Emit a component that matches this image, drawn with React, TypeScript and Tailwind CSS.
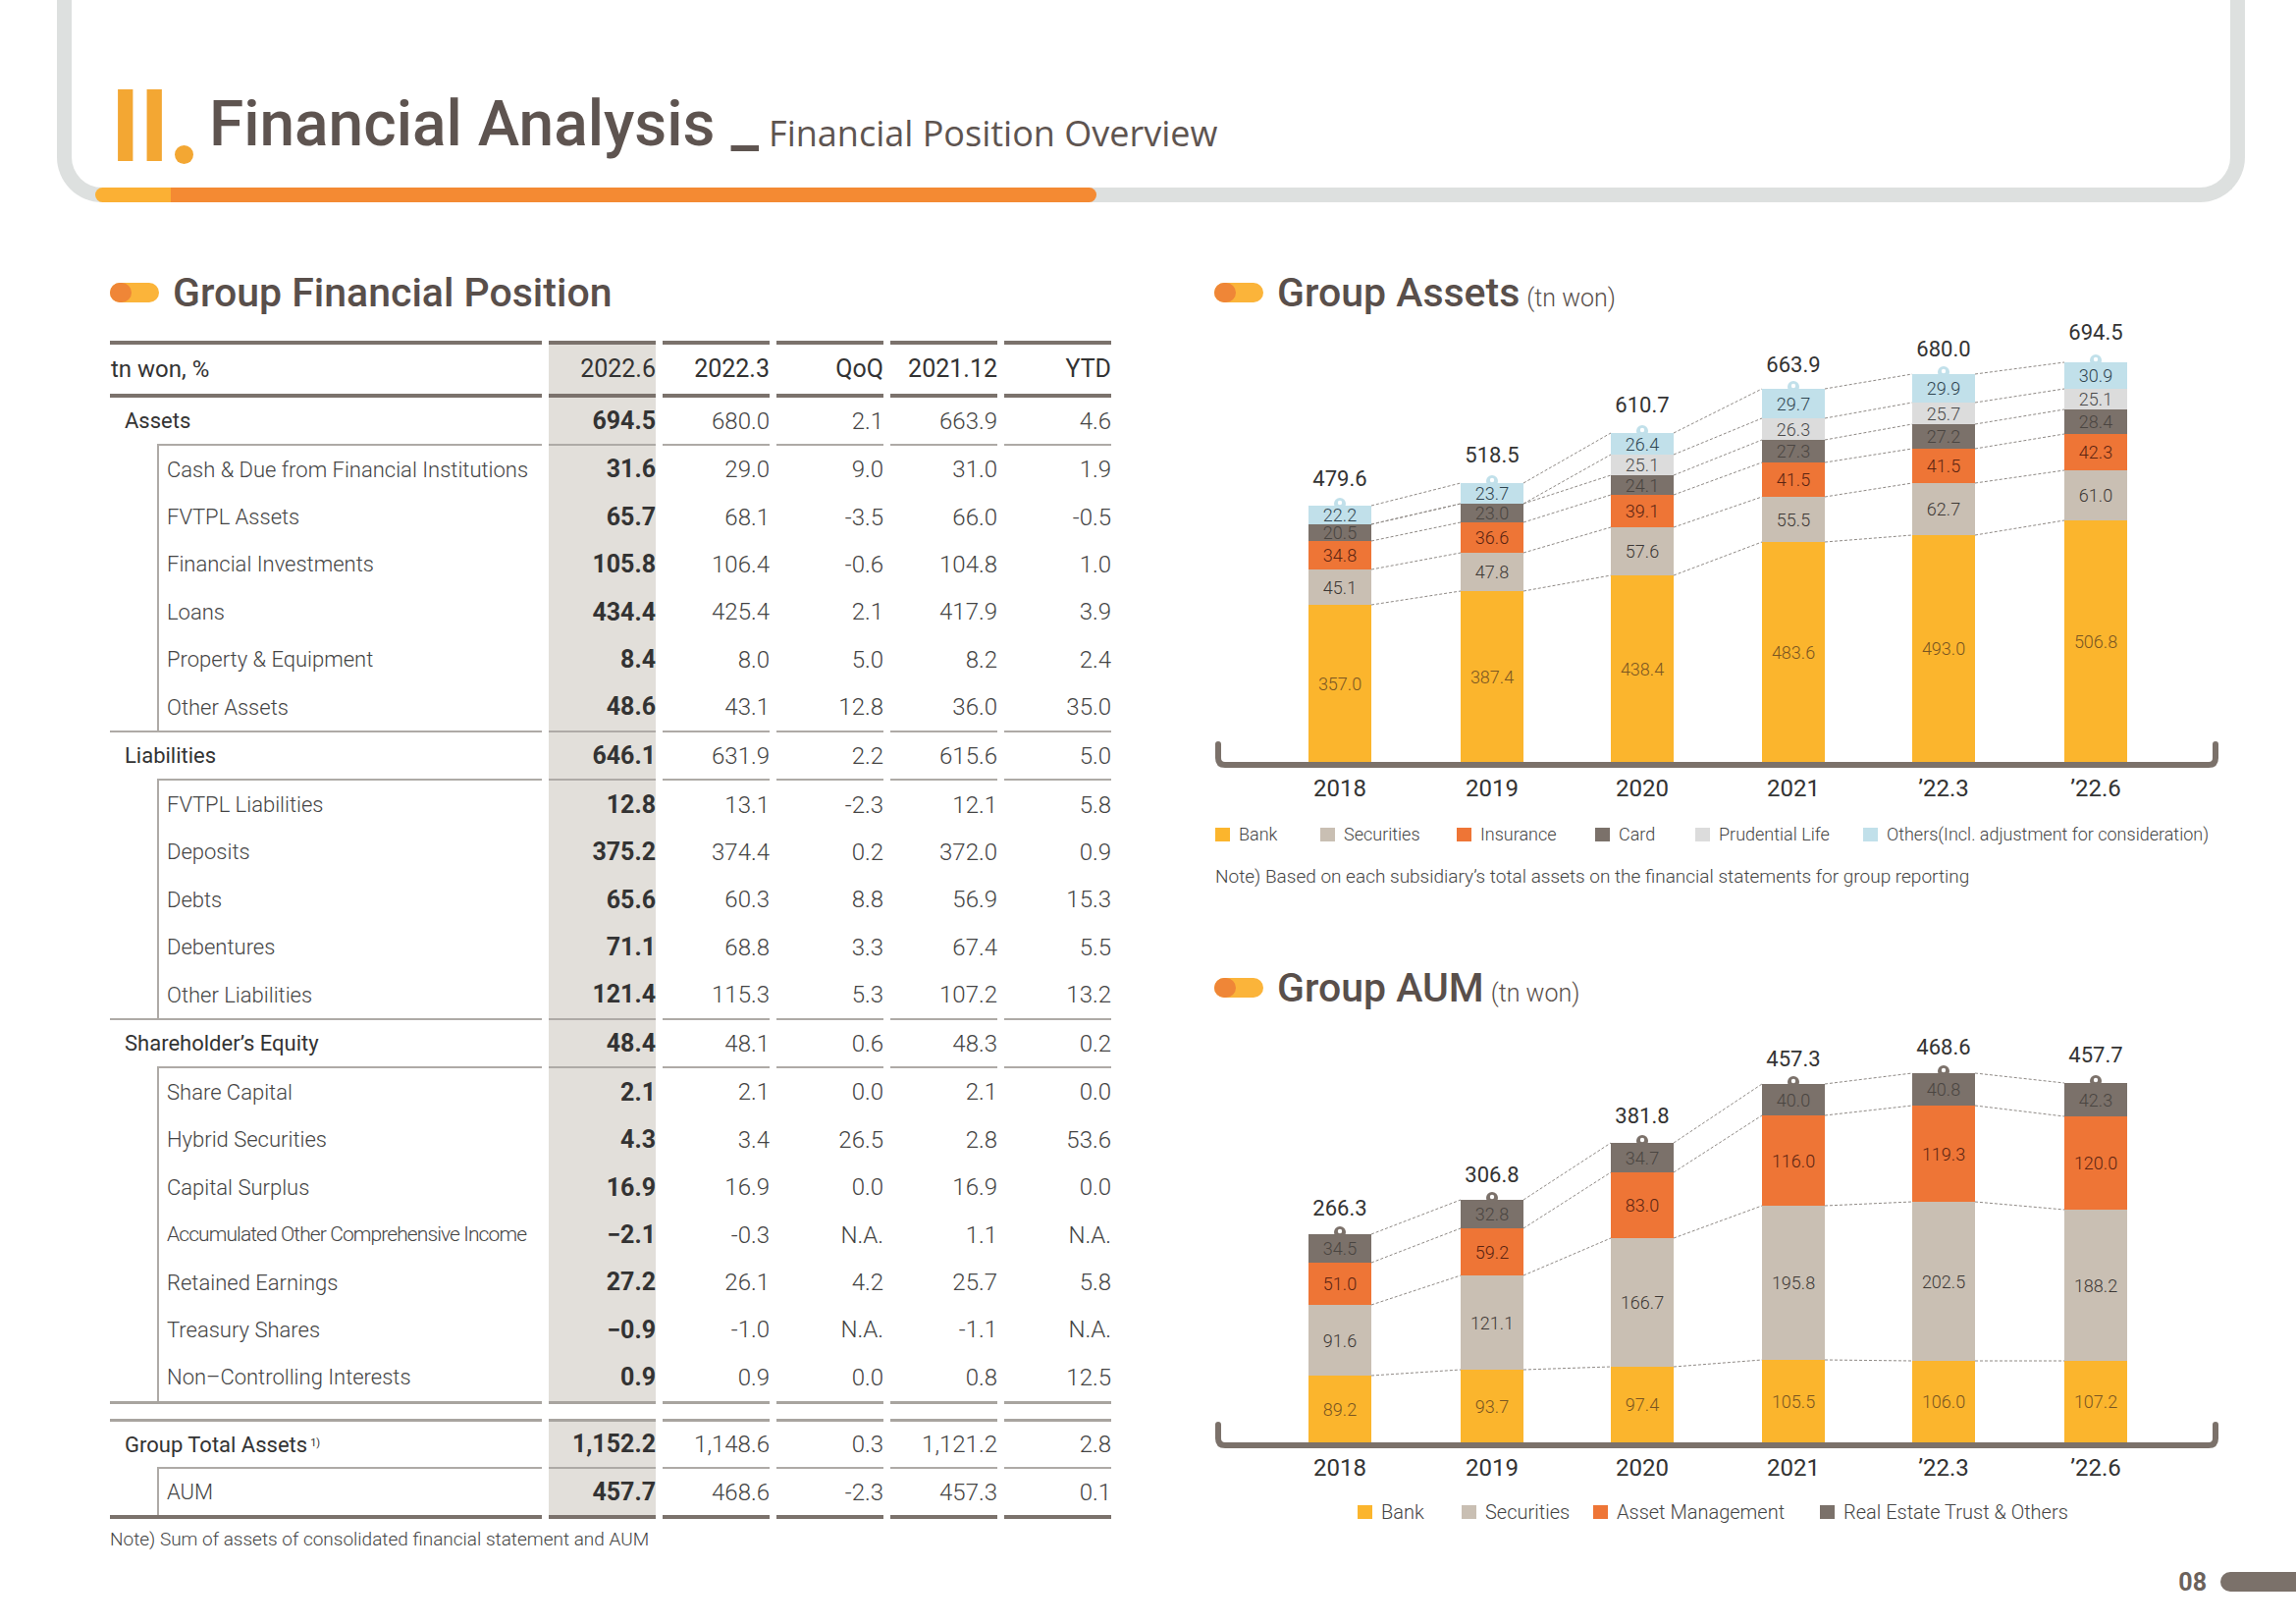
import React from 'react';

const BAR_X = [96, 251, 404, 558, 711, 866];
const BW = 64;
const YEARS = ['2018', '2019', '2020', '2021', '\u201922.3', '\u201922.6'];

const ASSET_COLORS = ['#fbb52d', '#c9bfb3', '#ee7536', '#7b716a', '#dcdcdc', '#c1e0ea'];
const ASSET_TEXT = ['#7a5522', '#3d3835', '#5a2412', '#4a4541', '#4a4a4a', '#2f4550'];
const AUM_COLORS = ['#fbb52d', '#c9bfb3', '#ee7536', '#7b716a'];
const AUM_TEXT = ['#7a5522', '#3d3835', '#5a2412', '#4a4541'];

const ASSET_BOUNDS = [
  [458, 298, 262, 233, 216, 216, 197],
  [458, 284, 245, 214, 195, 195, 174],
  [458, 268, 219, 186, 166, 145, 123],
  [458, 234, 188, 153, 130, 108, 78],
  [458, 227, 174, 139, 114, 92, 63],
  [458, 212, 161, 124, 99, 78, 51],
];
const ASSET_VALS = [
  ['357.0', '45.1', '34.8', '20.5', '', '22.2'],
  ['387.4', '47.8', '36.6', '23.0', '', '23.7'],
  ['438.4', '57.6', '39.1', '24.1', '25.1', '26.4'],
  ['483.6', '55.5', '41.5', '27.3', '26.3', '29.7'],
  ['493.0', '62.7', '41.5', '27.2', '25.7', '29.9'],
  ['506.8', '61.0', '42.3', '28.4', '25.1', '30.9'],
];
const ASSET_TOTALS = ['479.6', '518.5', '610.7', '663.9', '680.0', '694.5'];
const ASSET_TOTAL_Y = [169.5, 145, 94, 53, 37, 20];

const AUM_BOUNDS = [
  [443, 375, 303, 260, 231],
  [443, 369, 273, 225, 196],
  [443, 366, 235, 168, 138],
  [443, 359, 202, 110, 78],
  [443, 360, 198, 100, 67],
  [443, 360, 206, 111, 77],
];
const AUM_VALS = [
  ['89.2', '91.6', '51.0', '34.5'],
  ['93.7', '121.1', '59.2', '32.8'],
  ['97.4', '166.7', '83.0', '34.7'],
  ['105.5', '195.8', '116.0', '40.0'],
  ['106.0', '202.5', '119.3', '40.8'],
  ['107.2', '188.2', '120.0', '42.3'],
];
const AUM_TOTALS = ['266.3', '306.8', '381.8', '457.3', '468.6', '457.7'];
const AUM_TOTAL_Y = [204, 170, 110, 52, 40, 48];

type ChartProps = {
  bounds: number[][];
  vals: string[][];
  totals: string[];
  totalY: number[];
  colors: string[];
  textColors: string[];
  height: number;
  base: number;
  yearY: number;
};

function StackChart({ bounds, vals, totals, totalY, colors, textColors, height, base, yearY }: ChartProps) {
  const b3 = base + 3;
  const bracket = `M 4 ${base - 18} L 4 ${base - 4} Q 4 ${b3} 11 ${b3} L 1013 ${b3} Q 1020 ${b3} 1020 ${base - 4} L 1020 ${base - 18}`;
  return (
    <svg width={1030} height={height} className="block" fontFamily="Roboto, sans-serif">
      {bounds.slice(0, -1).map((b, i) =>
        b.slice(1).map((y, k) => (
          <line
            key={`c${i}-${k}`}
            x1={BAR_X[i] + BW}
            y1={y}
            x2={BAR_X[i + 1]}
            y2={bounds[i + 1][k + 1]}
            stroke="#8f8a86"
            strokeWidth={1}
            strokeDasharray="3 2"
          />
        ))
      )}
      {bounds.map((b, i) => {
        const cx = BAR_X[i] + BW / 2;
        const top = b[b.length - 1];
        const topColor = colors[b.length - 2];
        return (
          <g key={i}>
            {b.slice(0, -1).map((y0, k) => {
              const y1 = b[k + 1];
              if (y0 - y1 <= 0) return null;
              return <rect key={k} x={BAR_X[i]} y={y1} width={BW} height={y0 - y1} fill={colors[k]} />;
            })}
            <circle cx={cx} cy={top - 2} r={6} fill={topColor} />
            <circle cx={cx} cy={top - 3} r={2.2} fill="#ffffff" />
            {vals[i].map((v, k) =>
              v ? (
                <text
                  key={`t${k}`}
                  x={cx}
                  y={(b[k] + b[k + 1]) / 2}
                  textAnchor="middle"
                  dominantBaseline="central"
                  fontSize={18}
                  fontWeight={300}
                  fill={textColors[k]}
                >
                  {v}
                </text>
              ) : null
            )}
            <text x={cx} y={totalY[i]} textAnchor="middle" dominantBaseline="central" fontSize={22} fill="#333333">
              {totals[i]}
            </text>
            <text x={cx} y={yearY} textAnchor="middle" dominantBaseline="central" fontSize={24} fill="#333333">
              {YEARS[i]}
            </text>
          </g>
        );
      })}
      <path d={bracket} fill="none" stroke="#7b716a" strokeWidth={6} strokeLinecap="round" />
    </svg>
  );
}

function SectionHead({ title, unit }: { title: string; unit?: string }) {
  return (
    <div className="h-[40px] flex items-center">
      <div className="w-[50px] h-[20px] rounded-full bg-[#fbb43a] overflow-hidden flex">
        <div className="w-[22px] h-full rounded-r-full bg-[#ef8637]" />
      </div>
      <div className="ml-[14px] flex items-baseline leading-none">
        <span className="text-[41px] font-medium text-[#594f4b]">{title}</span>
        {unit && <span className="ml-[7px] text-[25px] font-light text-[#594f4b]">{unit}</span>}
      </div>
    </div>
  );
}

function HLine({ cls, indent }: { cls: string; indent?: boolean }) {
  return (
    <div className="flex gap-x-[7px]">
      <div className="w-[440px] flex">
        <div className={`${indent ? 'ml-[48px]' : ''} flex-1 ${cls}`} />
      </div>
      {[0, 1, 2, 3, 4].map((i) => (
        <div key={i} className={`w-[109px] ${cls}`} />
      ))}
    </div>
  );
}

type RowProps = { kind: 'header' | 'group' | 'sub'; label: React.ReactNode; v: string[]; h: string; labelCls?: string };

function Row({ kind, label, v, h, labelCls }: RowProps) {
  let labelCell: React.ReactNode;
  if (kind === 'sub') {
    labelCell = (
      <div className="w-[440px] flex">
        <div className="ml-[48px] flex-1 flex items-center border-l-2 border-[#aeaaa6] pl-[8px] text-[#444]">
          <span className={labelCls ?? 'text-[22px] font-light'}>{label}</span>
        </div>
      </div>
    );
  } else if (kind === 'group') {
    labelCell = (
      <div className="w-[440px] flex items-center pl-[15px] text-[#333]">
        <span className="text-[22px]">{label}</span>
      </div>
    );
  } else {
    labelCell = (
      <div className="w-[440px] flex items-center pl-[1px] text-[#333]">
        <span className="text-[24px]">{label}</span>
      </div>
    );
  }
  return (
    <div className={`flex gap-x-[7px] ${h}`}>
      {labelCell}
      {v.map((x, i) => {
        const shade = i === 0 ? 'bg-[#e2dfda]' : '';
        const txt =
          kind === 'header'
            ? 'text-[25px] text-[#333]'
            : i === 0
            ? 'text-[25px] font-bold text-[#333]'
            : 'text-[24px] font-light text-[#444]';
        return (
          <div key={i} className={`w-[109px] flex items-center justify-end ${shade} ${txt}`}>
            {x}
          </div>
        );
      })}
    </div>
  );
}

const DARK = 'h-[4px] bg-[#7b726c]';
const THIN = 'h-[2px] bg-[#aeaaa6]';
const GRAY = 'h-[3px] bg-[#a8a49f]';
const SUB_H = 'h-[48.4px]';

type D = { label: React.ReactNode; v: string[]; cls?: string };

const ASSETS_SUB: D[] = [
  { label: 'Cash & Due from Financial Institutions', v: ['31.6', '29.0', '9.0', '31.0', '1.9'] },
  { label: 'FVTPL Assets', v: ['65.7', '68.1', '-3.5', '66.0', '-0.5'] },
  { label: 'Financial Investments', v: ['105.8', '106.4', '-0.6', '104.8', '1.0'] },
  { label: 'Loans', v: ['434.4', '425.4', '2.1', '417.9', '3.9'] },
  { label: 'Property & Equipment', v: ['8.4', '8.0', '5.0', '8.2', '2.4'] },
  { label: 'Other Assets', v: ['48.6', '43.1', '12.8', '36.0', '35.0'] },
];
const LIAB_SUB: D[] = [
  { label: 'FVTPL Liabilities', v: ['12.8', '13.1', '-2.3', '12.1', '5.8'] },
  { label: 'Deposits', v: ['375.2', '374.4', '0.2', '372.0', '0.9'] },
  { label: 'Debts', v: ['65.6', '60.3', '8.8', '56.9', '15.3'] },
  { label: 'Debentures', v: ['71.1', '68.8', '3.3', '67.4', '5.5'] },
  { label: 'Other Liabilities', v: ['121.4', '115.3', '5.3', '107.2', '13.2'] },
];
const EQ_SUB: D[] = [
  { label: 'Share Capital', v: ['2.1', '2.1', '0.0', '2.1', '0.0'] },
  { label: 'Hybrid Securities', v: ['4.3', '3.4', '26.5', '2.8', '53.6'] },
  { label: 'Capital Surplus', v: ['16.9', '16.9', '0.0', '16.9', '0.0'] },
  {
    label: 'Accumulated Other Comprehensive Income',
    v: ['\u22122.1', '-0.3', 'N.A.', '1.1', 'N.A.'],
    cls: 'text-[21px] font-light tracking-[-0.9px]',
  },
  { label: 'Retained Earnings', v: ['27.2', '26.1', '4.2', '25.7', '5.8'] },
  { label: 'Treasury Shares', v: ['\u22120.9', '-1.0', 'N.A.', '-1.1', 'N.A.'] },
  { label: 'Non\u2013Controlling Interests', v: ['0.9', '0.9', '0.0', '0.8', '12.5'] },
];

function Table() {
  const subs = (arr: D[]) =>
    arr.map((d, i) => <Row key={i} kind="sub" label={d.label} v={d.v} h={SUB_H} labelCls={d.cls} />);
  return (
    <div className="mt-[29px] w-[1020px]">
      <HLine cls={DARK} />
      <Row kind="header" label="tn won, %" v={['2022.6', '2022.3', 'QoQ', '2021.12', 'YTD']} h="h-[50px]" />
      <HLine cls={DARK} />
      <Row kind="group" label="Assets" v={['694.5', '680.0', '2.1', '663.9', '4.6']} h="h-[47px]" />
      <HLine cls={THIN} indent />
      {subs(ASSETS_SUB)}
      <HLine cls={THIN} />
      <Row kind="group" label="Liabilities" v={['646.1', '631.9', '2.2', '615.6', '5.0']} h="h-[47px]" />
      <HLine cls={THIN} indent />
      {subs(LIAB_SUB)}
      <HLine cls={THIN} />
      <Row kind="group" label={'Shareholder\u2019s Equity'} v={['48.4', '48.1', '0.6', '48.3', '0.2']} h="h-[47px]" />
      <HLine cls={THIN} indent />
      {subs(EQ_SUB)}
      <HLine cls={GRAY} />
      <div className="h-[15px]" />
      <HLine cls={GRAY} />
      <Row
        kind="group"
        label={
          <>
            Group Total Assets<sup className="text-[11px] ml-[3px]">1)</sup>
          </>
        }
        v={['1,152.2', '1,148.6', '0.3', '1,121.2', '2.8']}
        h="h-[46px]"
      />
      <HLine cls={THIN} indent />
      <Row kind="sub" label="AUM" v={['457.7', '468.6', '-2.3', '457.3', '0.1']} h="h-[47px]" />
      <HLine cls={DARK} />
      <div className="mt-[9px] h-[24px] flex items-center text-[19px] font-light text-[#444]">
        Note) Sum of assets of consolidated financial statement and AUM
      </div>
    </div>
  );
}

function LegendItem({ color, label, w, text }: { color: string; label: string; w?: string; text: string }) {
  return (
    <div className={`flex items-center ${w ?? ''}`}>
      <span className={`w-[15px] h-[14px] ${color}`} />
      <span className={`ml-[9px] font-light text-[#444] leading-none ${text}`}>{label}</span>
    </div>
  );
}

function Header() {
  return (
    <div className="ml-[58px] mr-[52px] h-[206px] border-x-[15px] border-b-[15px] border-[#dde0df] rounded-b-[46px] relative">
      <div className="flex items-end pt-[74px] pl-[40px]">
        <span className="font-['Liberation_Sans',sans-serif] font-bold text-[106px] leading-none text-[#f3a733]">II</span>
        <span className="ml-[6px] mb-[13px] w-[19px] h-[19px] rounded-full bg-[#f3a733]" />
        <span className="ml-[16px] mb-[21px] text-[64px] font-medium leading-none text-[#5e5450]">
          Financial Analysis _
        </span>
        <span className="ml-[10px] mb-[26px] font-['Open_Sans',sans-serif] text-[36px] leading-none text-[#5e5450]">
          Financial Position Overview
        </span>
      </div>
      <div className="absolute left-[24px] bottom-[-15px] h-[15px] w-[1020px] flex rounded-full overflow-hidden">
        <div className="w-[77px] bg-[#fbb034]" />
        <div className="flex-1 bg-[#f48a33]" />
      </div>
    </div>
  );
}

export default function App() {
  return (
    <div className="w-[2339px] h-[1654px] bg-white overflow-hidden font-['Roboto',sans-serif]">
      <Header />
      <div className="flex pl-[112px]">
        <div className="w-[1022px] pt-[72px]">
          <SectionHead title="Group Financial Position" />
          <Table />
        </div>
        <div className="ml-[103px] flex-1 pt-[72px]">
          <SectionHead title="Group Assets" unit="(tn won)" />
          <StackChart
            bounds={ASSET_BOUNDS}
            vals={ASSET_VALS}
            totals={ASSET_TOTALS}
            totalY={ASSET_TOTAL_Y}
            colors={ASSET_COLORS}
            textColors={ASSET_TEXT}
            height={502}
            base={458}
            yearY={485}
          />
          <div className="mt-[18px] h-[24px] ml-[1px] flex items-center">
            <LegendItem text="text-[18px]" color="bg-[#fbb52d]" label="Bank" w="w-[107px]" />
            <LegendItem text="text-[18px]" color="bg-[#c9bfb3]" label="Securities" w="w-[139px]" />
            <LegendItem text="text-[18px]" color="bg-[#ee7536]" label="Insurance" w="w-[141px]" />
            <LegendItem text="text-[18px]" color="bg-[#7b716a]" label="Card" w="w-[102px]" />
            <LegendItem text="text-[18px]" color="bg-[#dcdcdc]" label="Prudential Life" w="w-[171px]" />
            <LegendItem text="text-[18px]" color="bg-[#c1e0ea]" label="Others(Incl. adjustment for consideration)" />
          </div>
          <div className="mt-[19px] h-[24px] ml-[1px] flex items-center text-[19px] font-light text-[#444]">
            Note) Based on each subsidiary&rsquo;s total assets on the financial statements for group reporting
          </div>
          <div className="mt-[81px]">
            <SectionHead title="Group AUM" unit="(tn won)" />
          </div>
          <StackChart
            bounds={AUM_BOUNDS}
            vals={AUM_VALS}
            totals={AUM_TOTALS}
            totalY={AUM_TOTAL_Y}
            colors={AUM_COLORS}
            textColors={AUM_TEXT}
            height={485}
            base={443}
            yearY={469}
          />
          <div className="mt-[17px] h-[24px] ml-[146px] flex items-center">
            <LegendItem text="text-[20px]" color="bg-[#fbb52d]" label="Bank" w="w-[106px]" />
            <LegendItem text="text-[20px]" color="bg-[#c9bfb3]" label="Securities" w="w-[134px]" />
            <LegendItem text="text-[20px]" color="bg-[#ee7536]" label="Asset Management" w="w-[231px]" />
            <LegendItem text="text-[20px]" color="bg-[#7b716a]" label="Real Estate Trust & Others" />
          </div>
          <div className="mt-[47px] h-[24px] flex items-center justify-end">
            <span className="text-[25px] font-bold leading-none text-[#6b625c]">08</span>
            <span className="ml-[14px] w-[77px] h-[20px] rounded-l-full bg-[#7b716a]" />
          </div>
        </div>
      </div>
    </div>
  );
}
